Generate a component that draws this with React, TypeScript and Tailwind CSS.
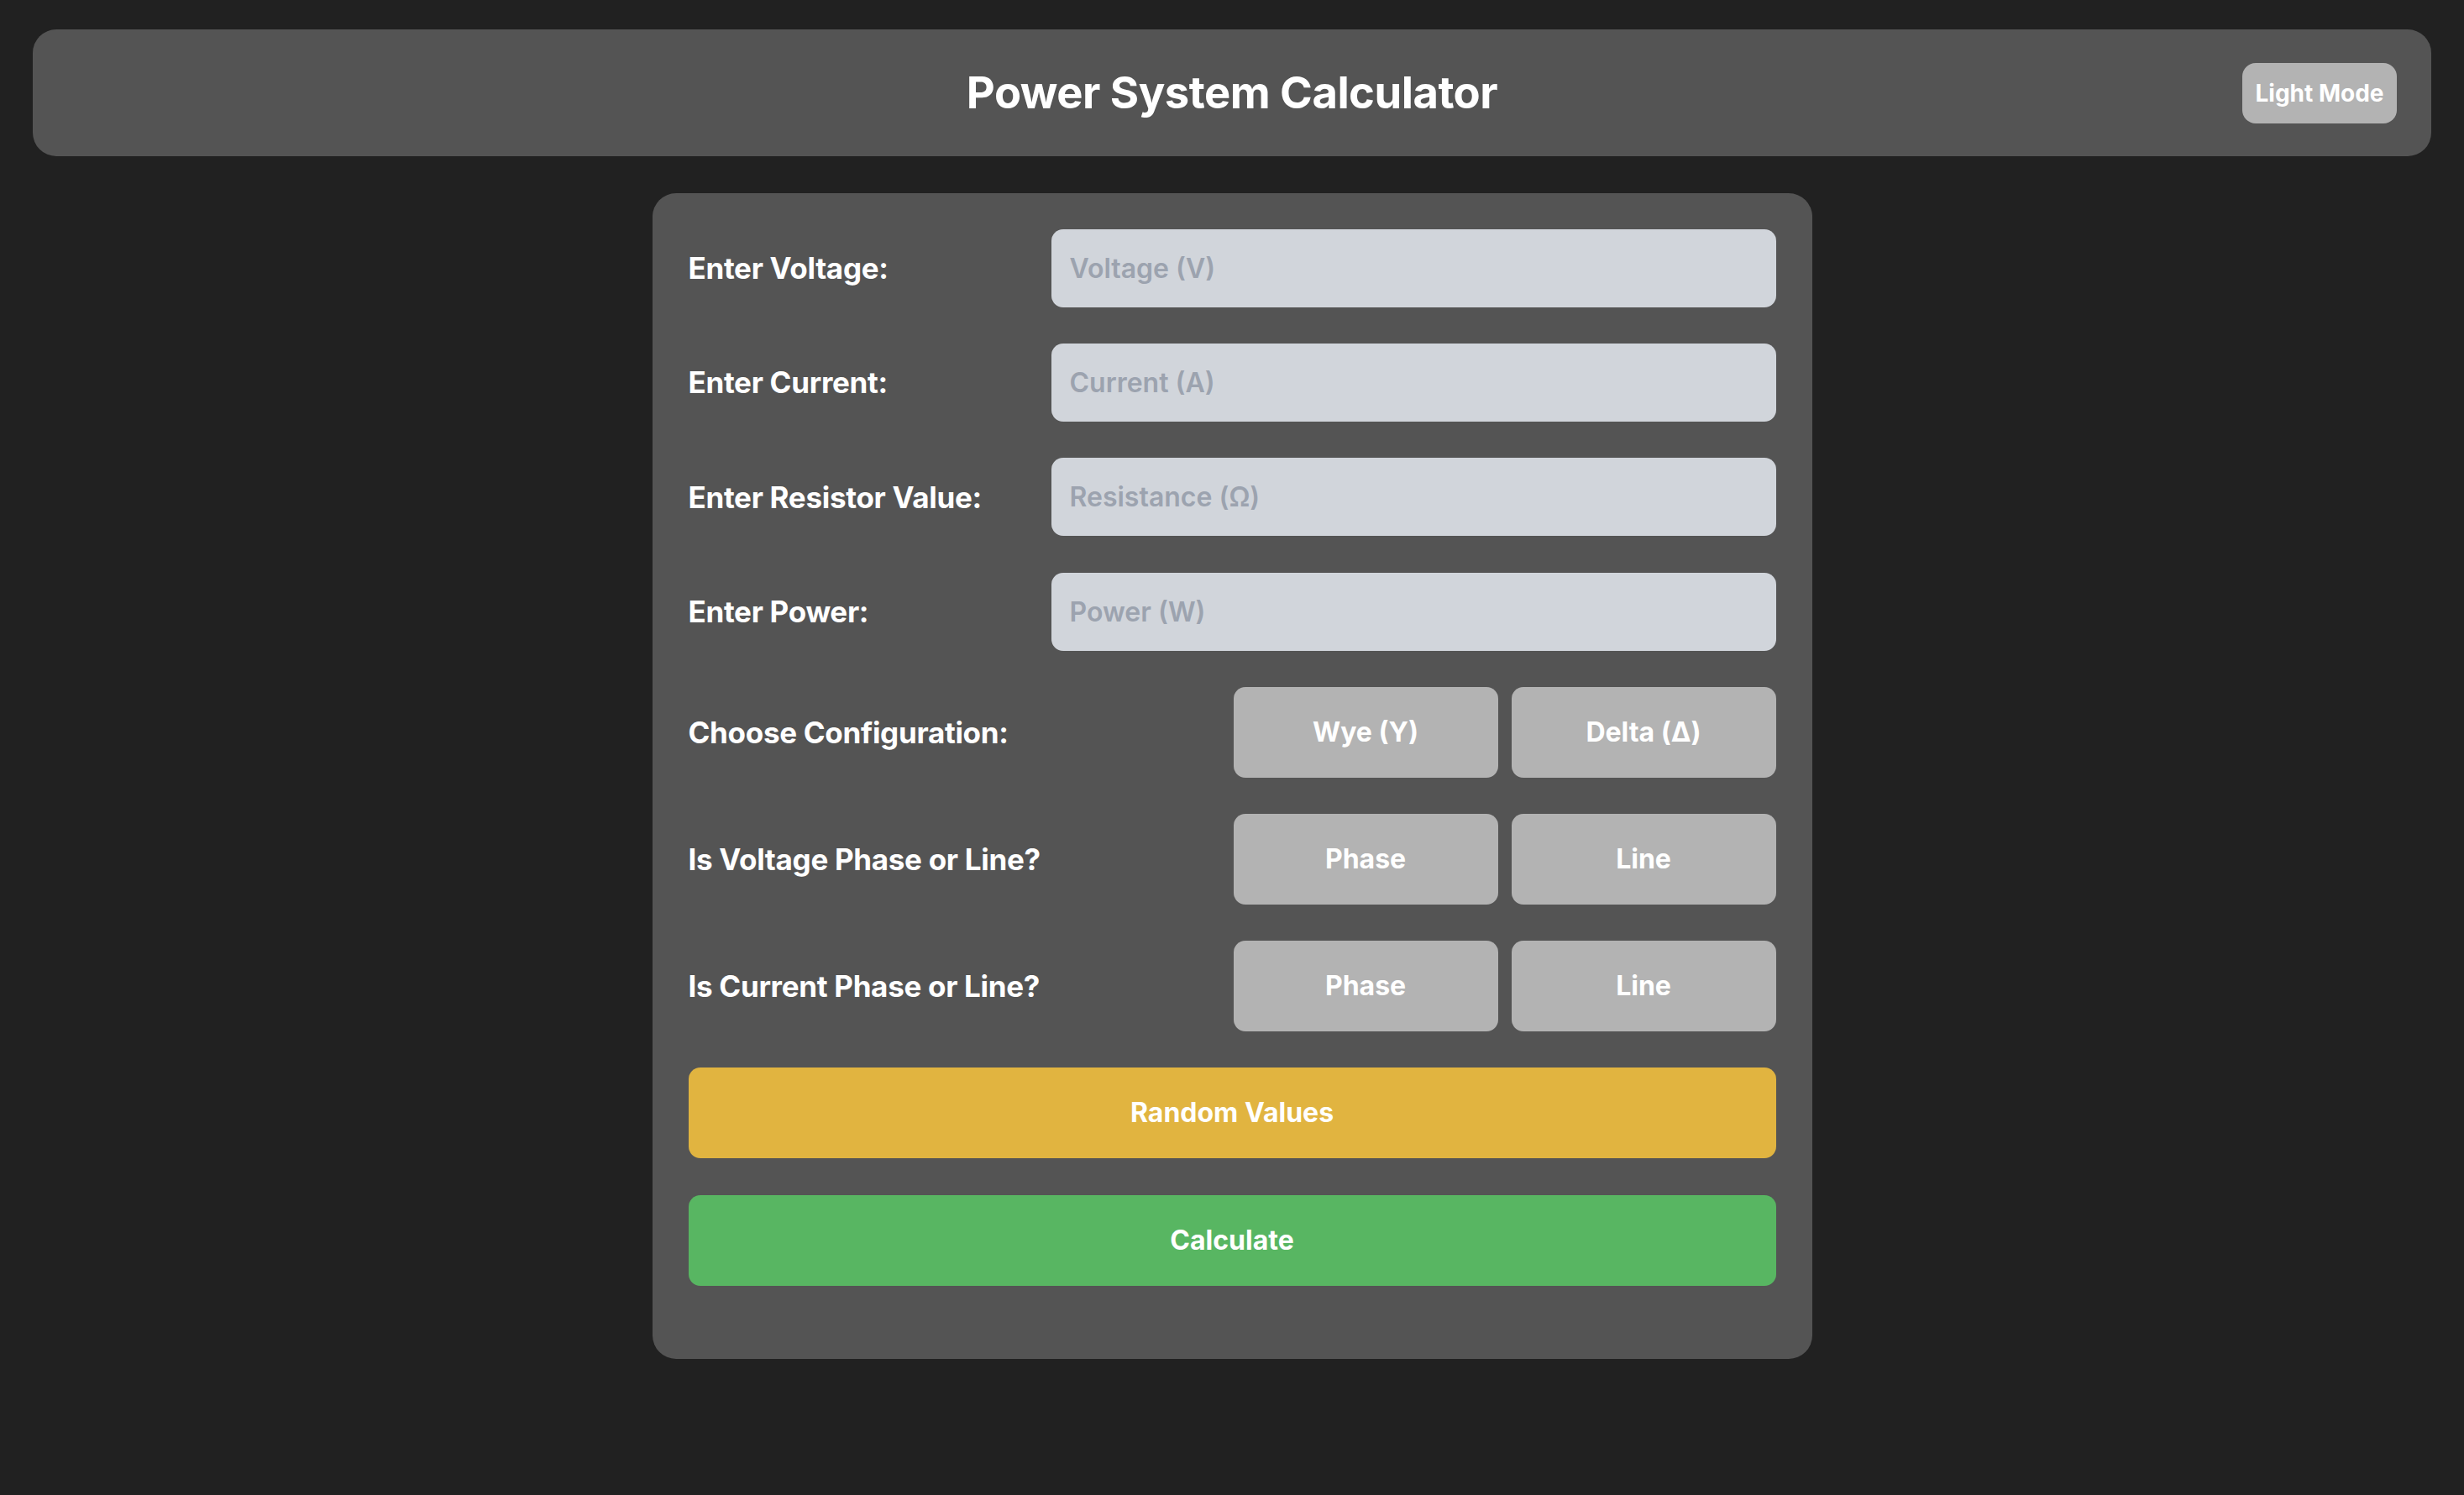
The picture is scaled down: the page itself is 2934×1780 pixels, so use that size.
import React from "react";

const inputs = [
  { label: "Enter Voltage:", placeholder: "Voltage (V)" },
  { label: "Enter Current:", placeholder: "Current (A)" },
  { label: "Enter Resistor Value:", placeholder: "Resistance (Ω)" },
  { label: "Enter Power:", placeholder: "Power (W)" },
];

const choices = [
  { label: "Choose Configuration:", options: ["Wye (Y)", "Delta (Δ)"] },
  { label: "Is Voltage Phase or Line?", options: ["Phase", "Line"] },
  { label: "Is Current Phase or Line?", options: ["Phase", "Line"] },
];

export default function App() {
  return (
    <div
      className="min-h-screen bg-[#212121] px-[39px] pt-[35px] text-white"
      style={{ fontFamily: "Inter, 'Noto Sans', sans-serif" }}
    >
      <header className="grid h-[151px] grid-cols-[1fr_auto_1fr] items-center rounded-[28px] bg-[#545454] px-[41px]">
        <div />
        <h1 className="text-[52.5px] font-bold tracking-[-0.5px]">Power System Calculator</h1>
        <button className="h-[72px] w-[184px] justify-self-end rounded-[16px] bg-[#b3b3b3] text-[28px] font-bold text-white">
          Light Mode
        </button>
      </header>

      <main className="mx-auto mt-[44px] flex w-[1381px] flex-col gap-[43.2px] rounded-[28px] bg-[#545454] px-[43px] pb-[87px] pt-[43px]">
        {inputs.map((item) => (
          <div key={item.label} className="flex items-center">
            <label className="w-[432px] text-[35px] font-bold tracking-[-0.3px]">{item.label}</label>
            <input
              type="text"
              placeholder={item.placeholder}
              className="h-[93px] flex-1 rounded-[14px] bg-[#d1d5db] px-[22px] text-[32px] font-semibold text-gray-700 outline-none placeholder:text-[#9ca3af]"
            />
          </div>
        ))}

        {choices.map((item) => (
          <div key={item.label} className="flex items-center">
            <span className="flex-1 text-[35px] font-bold tracking-[-0.3px]">{item.label}</span>
            <div className="flex gap-[16px]">
              {item.options.map((opt) => (
                <button
                  key={opt}
                  className="h-[108px] w-[315px] rounded-[14px] bg-[#b3b3b3] text-[32px] font-bold text-white"
                >
                  {opt}
                </button>
              ))}
            </div>
          </div>
        ))}

        <button className="h-[108px] w-full rounded-[14px] bg-[#e1b440] text-[32px] font-bold text-white">
          Random Values
        </button>
        <button className="h-[108px] w-full rounded-[14px] bg-[#58b662] text-[32px] font-bold text-white">
          Calculate
        </button>
      </main>
    </div>
  );
}
